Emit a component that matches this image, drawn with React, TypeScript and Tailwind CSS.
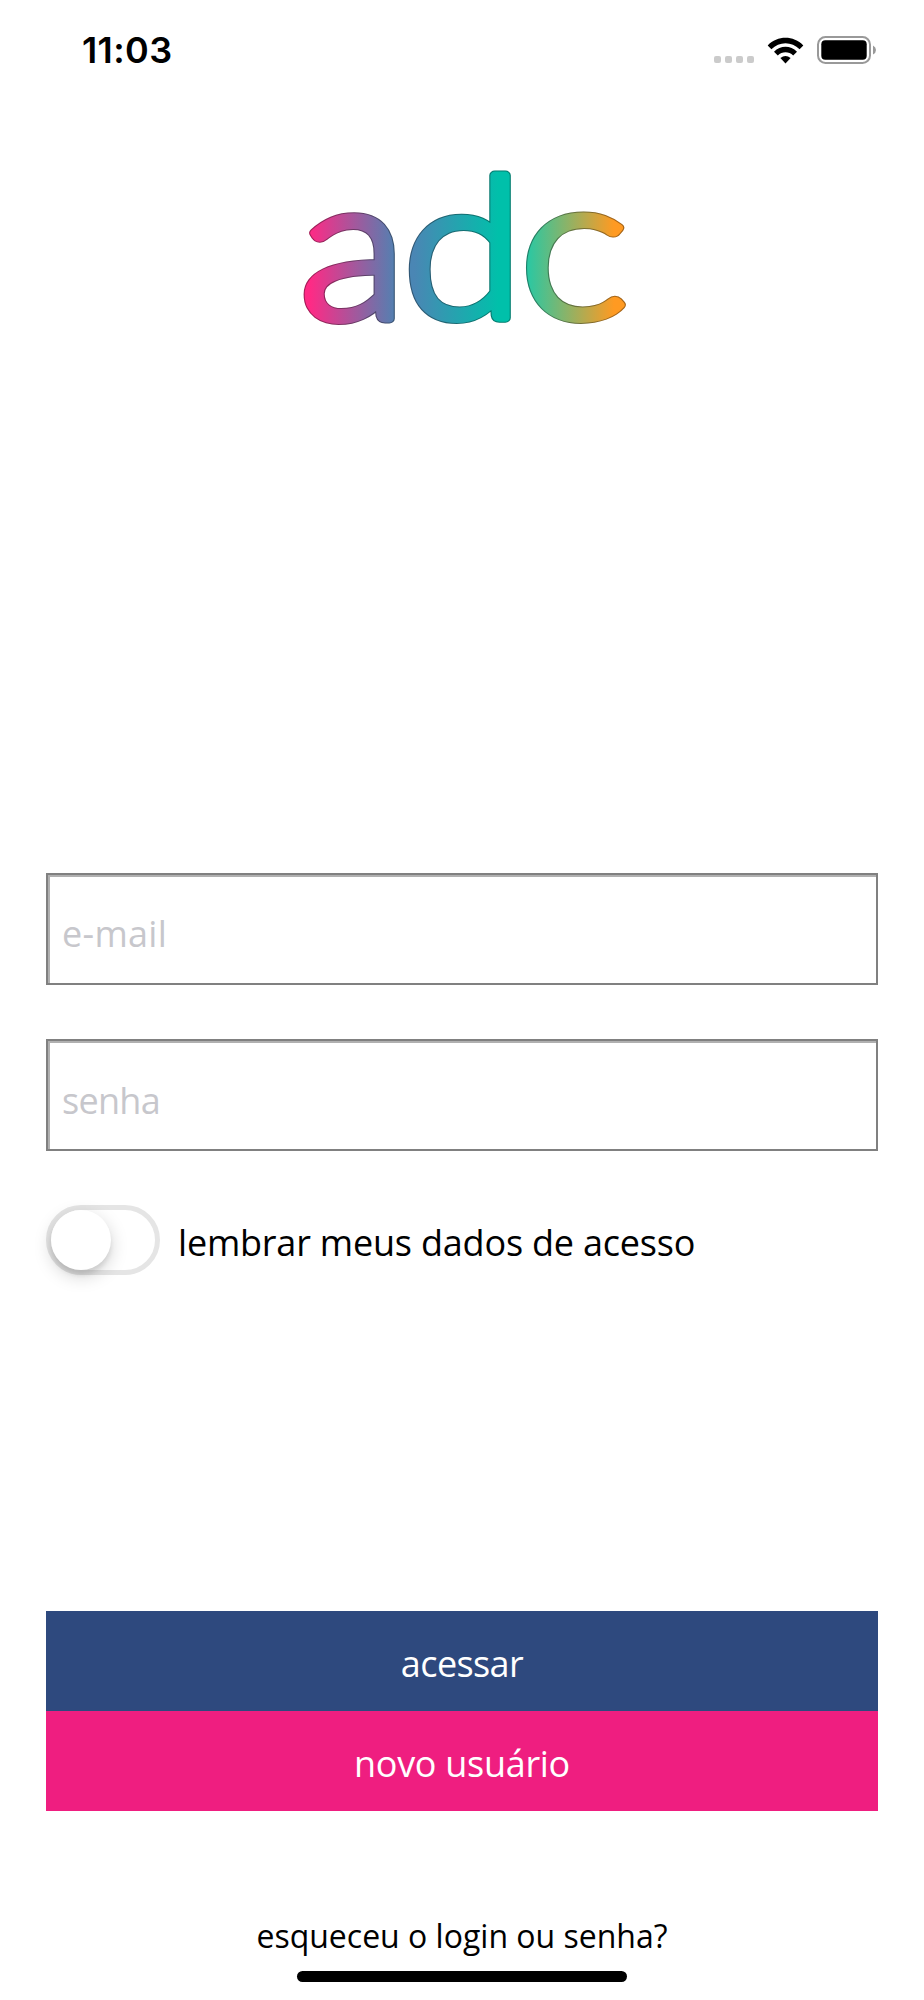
import React from 'react';

const letters = [
    { char: 'a', transform: 'translate(299.8 317.5) scale(1.1 1)', size: 'text-[200px]' },
    { char: 'd', transform: 'translate(402.8 317.5) scale(1.115 1)', size: 'text-[196px]' },
    { char: 'c', transform: 'translate(519.8 317.5) scale(1.15 1)', size: 'text-[200px]' },
];

const Logo = () => (
    <svg className="h-[290px] w-[400px]" viewBox="270 100 400 290">
        <defs>
            <linearGradient id="fill-a" gradientUnits="userSpaceOnUse" x1="9" y1="0" x2="88" y2="0">
                <stop offset="0" stopColor="#ff2a85" />
                <stop offset="1" stopColor="#4f82b2" />
            </linearGradient>
            <linearGradient id="fill-d" gradientUnits="userSpaceOnUse" x1="10" y1="0" x2="86" y2="0">
                <stop offset="0" stopColor="#4a86b4" />
                <stop offset="1" stopColor="#00c0aa" />
            </linearGradient>
            <linearGradient id="fill-c" gradientUnits="userSpaceOnUse" x1="6" y1="0" x2="82" y2="0">
                <stop offset="0" stopColor="#28c8a4" />
                <stop offset="1" stopColor="#ff9a22" />
            </linearGradient>
        </defs>
        {letters.map(({ char, transform, size }) => (
            <g
                key={char}
                transform={transform}
                className={`font-['Lato',sans-serif] font-light ${size}`}
                strokeLinejoin="round"
                fill={`url(#fill-${char})`}
                stroke={`url(#fill-${char})`}
            >
                <text strokeWidth="10" className="brightness-[.65]">{char}</text>
                <text strokeWidth="8">{char}</text>
            </g>
        ))}
    </svg>
);

const StatusBar = () => (
    <header className="flex h-[100px] items-center pl-[82px] pr-[47px]">
        <span className="font-['Inter',sans-serif] text-[36px] font-semibold leading-none tracking-[0.4px]">11:03</span>
        <div className="ml-auto flex items-center">
            <div className="mr-[13px] mt-[18px] flex gap-1">
                {[1, 2, 3, 4].map((dot) => (
                    <span key={dot} className="size-[7px] rounded-xs bg-[#cbcbcb]" />
                ))}
            </div>
            <svg className="mr-[13px] h-[27px] w-[37px]" viewBox="0 0 37 27">
                <path d="M0.7 8.4C10.5-1.8 26.5-1.8 36.3 8.4L32.6 12.2C24.8 4.1 12.2 4.1 4.4 12.2Z" />
                <path d="M7 14.7C13.4 8.2 23.6 8.2 30 14.7L26.2 18.5C21.9 14.2 15.1 14.2 10.8 18.5Z" />
                <path d="M13.4 21.1Q18.5 17 23.6 21.1L18.5 26.4Z" />
            </svg>
            <svg className="h-[28px] w-[60px]" viewBox="0 0 60 28">
                <rect x="1" y="1" width="52" height="26" rx="7.5" fill="none" stroke="#999" strokeWidth="2" />
                <rect x="4.3" y="4.3" width="45.4" height="19.4" rx="4" />
                <path d="M56 9.5q3 1.6 3 4.5t-3 4.5z" fill="#999" />
            </svg>
        </div>
    </header>
);

const Field = ({ label, spacing }: { label: string; spacing: string }) => (
    <input
        placeholder={label}
        className={`block h-[112px] w-full border-2 border-[#808080] px-[14px] text-[36px] shadow-[inset_2px_2px_0_#b0b0b0] outline-none placeholder:text-[#c7c7cc] placeholder:opacity-100 ${spacing}`}
    />
);

const App = () => {
    return (
        <div className="flex h-[2000px] w-[924px] flex-col bg-white font-['Open_Sans',sans-serif] text-black">
            <StatusBar />
            <div className="ml-[270px]">
                <Logo />
            </div>
            <main className="mt-[483px] px-[46px]">
                <div className="flex flex-col gap-[54px]">
                    <Field label="e-mail" spacing="pt-[8px] tracking-[0.3px]" />
                    <Field label="senha" spacing="pt-[10px] tracking-[-0.7px]" />
                </div>
                <div className="mt-[54px] flex items-center">
                    <div className="flex h-[70px] w-[114px] items-center rounded-full border-[5px] border-[#e5e5e5]">
                        <span className="size-[60px] rounded-full bg-white shadow-[0_6px_18px_rgba(0,0,0,0.18),0_5px_4px_rgba(0,0,0,0.08)]" />
                    </div>
                    <span className="ml-[18px] mt-[5px] whitespace-nowrap text-[36px] tracking-[-0.2px]">lembrar meus dados de acesso</span>
                </div>
                <div className="mt-[336px]">
                    <button className="block h-[100px] w-full bg-[#2e497e] pt-[5px] text-[36px] tracking-[-0.6px] text-white">acessar</button>
                    <button className="block h-[100px] w-full bg-[#ef1e80] pt-[5px] text-[36px] tracking-[-0.3px] text-white">novo usuário</button>
                </div>
            </main>
            <footer className="mt-auto flex flex-col items-center pb-[18px]">
                <a className="text-[32px] leading-[44px]">esqueceu o login ou senha?</a>
                <div className="mt-[13px] h-[11px] w-[330px] rounded-full bg-black" />
            </footer>
        </div>
    );
};

export default App;
